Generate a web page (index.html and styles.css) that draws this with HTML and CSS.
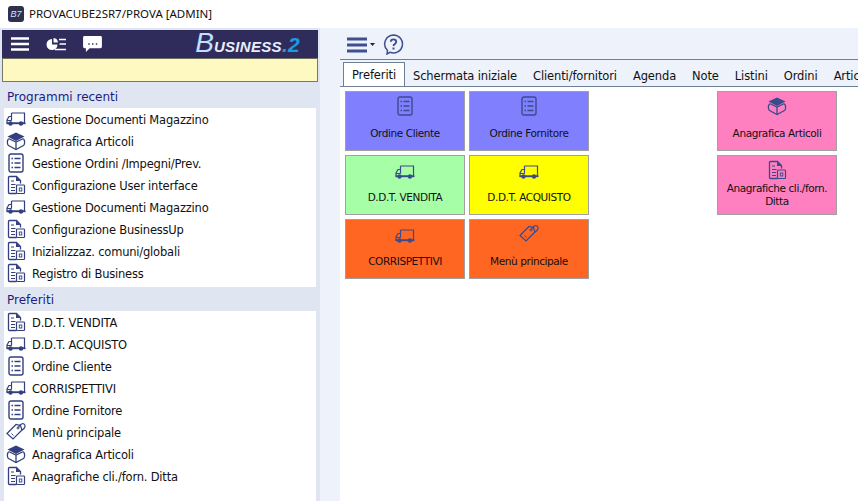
FILE: index.html
```html
<!DOCTYPE html>
<html lang="it">
<head>
<meta charset="utf-8">
<title>PROVACUBE2SR7/PROVA [ADMIN]</title>
<link rel="stylesheet" href="styles.css">
</head>
<body>
<svg class="defs" width="0" height="0" aria-hidden="true">
  <symbol id="truck" viewBox="0 0 20 14">
    <path d="M5.500 1H18.500V11H1V8L3 4.500H5.500M5.500 1V8.500M1 8.500H5.500" fill="none" stroke="currentColor" stroke-width="1.200"/>
    <path d="M0.500 10.500H19.500V12.200H0.500Z" fill="currentColor"/>
    <circle cx="4.500" cy="11.500" r="2.200" fill="currentColor"/>
    <circle cx="15" cy="11.500" r="2.200" fill="currentColor"/>
  </symbol>
  <symbol id="box" viewBox="0 0 20 20">
    <path d="M2.500 8C0.500 10 1.500 14 2.500 14.500L10 18.500L17.500 14.500C18.500 14 19.500 10 17.500 8" fill="none" stroke="currentColor" stroke-width="1.300"/>
    <path d="M10 11V18.500M2.500 7.500L10 11L17.500 7.500" fill="none" stroke="currentColor" stroke-width="1.300"/>
    <path d="M10 1.500L18.500 5.500L10 10L1.500 5.500Z" fill="currentColor"/>
  </symbol>
  <symbol id="list" viewBox="0 0 16 20">
    <rect x="1" y="1" width="14" height="18" rx="2" fill="none" stroke="currentColor" stroke-width="1.400"/>
    <path d="M3.500 5.500H5M3.500 10H5M3.500 14.500H5M6.500 5.500H12.500M6.500 10H12.500M6.500 14.500H12.500" stroke="currentColor" stroke-width="1.600"/>
  </symbol>
  <symbol id="doc" viewBox="0 0 18 20">
    <path d="M9.500 18.500H2.500A1 1 0 0 1 1.500 17.500V2.500A1 1 0 0 1 2.500 1.500H9.500L13.500 5.500V8.500" fill="none" stroke="currentColor" stroke-width="1.300"/>
    <path d="M9 1.500V6H13.500Z" fill="currentColor"/>
    <path d="M4 6H7M4 9.500H8.500M4 12.500H8M4 15.500H8" stroke="currentColor" stroke-width="1.200"/>
    <rect x="9.500" y="10" width="8" height="8.500" rx=".8" fill="none" stroke="currentColor" stroke-width="1.200"/>
    <rect x="12.300" y="13" width="2.500" height="3" fill="none" stroke="currentColor" stroke-width=".9"/>
  </symbol>
  <symbol id="tag" viewBox="0 0 20 20">
    <path d="M1 11.500L10 2.500L14.500 3.500L16 8L7 17Z" fill="none" stroke="currentColor" stroke-width="1.200"/>
    <circle cx="12" cy="6" r="1" fill="none" stroke="currentColor"/>
    <path d="M12.500 5.500C14 1 19 0.500 19 4C19 6 17 8 15 8" fill="none" stroke="currentColor" stroke-width="1.200"/>
    <path d="M5.500 11.500L7.500 13.500" stroke="currentColor"/>
  </symbol>
</svg>

<header class="titlebar">
  <span class="app-icon">B7</span>
  <span class="app-title">PROVACUBE2SR7/PROVA [ADMIN]</span>
</header>

<div class="workspace">
  <aside class="sidebar">
    <div class="brandbar">
      <svg class="b-icon" width="18" height="14" viewBox="0 0 18 14"><path d="M0 1.500H18M0 7H18M0 12.500H18" stroke="#fff" stroke-width="2.600"/></svg>
      <svg class="b-icon" width="20" height="14" viewBox="0 0 20 14"><path d="M6 2A5.500 5.500 0 1 0 11.500 7.500H6Z" fill="#fff"/><path d="M7.500 1A5 5 0 0 1 12 5.500H7.500Z" fill="#fff"/><path d="M13 2.500H20M13.500 7H20M9 12.500H20" stroke="#fff" stroke-width="1.700"/></svg>
      <svg class="b-icon" width="19" height="16" viewBox="0 0 20 17"><path d="M1.500 0H18.500A1.500 1.500 0 0 1 20 1.500V11.500A1.500 1.500 0 0 1 18.500 13H7L3 17V13H1.500A1.500 1.500 0 0 1 0 11.500V1.500A1.500 1.500 0 0 1 1.500 0Z" fill="#fff"/><path d="M5.500 8.500H7M9.500 8.500H11M13.500 8.500H15" stroke="#2f2c5c" stroke-width="1.800"/></svg>
      <div class="logo"><span class="logo-b">B</span>usiness<span class="logo-two">.2</span></div>
    </div>
    <div class="notice"></div>

    <h2 class="sec-title sec-first">Programmi recenti</h2>
    <ul class="menu">
      <li><svg class="mi mi-truck"><use href="#truck"/></svg>Gestione Documenti Magazzino</li>
      <li><svg class="mi"><use href="#box"/></svg>Anagrafica Articoli</li>
      <li><svg class="mi"><use href="#list"/></svg>Gestione Ordini /Impegni/Prev.</li>
      <li><svg class="mi"><use href="#doc"/></svg>Configurazione User interface</li>
      <li><svg class="mi mi-truck"><use href="#truck"/></svg>Gestione Documenti Magazzino</li>
      <li><svg class="mi"><use href="#doc"/></svg>Configurazione BusinessUp</li>
      <li><svg class="mi"><use href="#doc"/></svg>Inizializzaz. comuni/globali</li>
      <li><svg class="mi"><use href="#doc"/></svg>Registro di Business</li>
    </ul>

    <h2 class="sec-title">Preferiti</h2>
    <ul class="menu menu-fill">
      <li><svg class="mi"><use href="#doc"/></svg>D.D.T. VENDITA</li>
      <li><svg class="mi mi-truck"><use href="#truck"/></svg>D.D.T. ACQUISTO</li>
      <li><svg class="mi"><use href="#list"/></svg>Ordine Cliente</li>
      <li><svg class="mi mi-truck"><use href="#truck"/></svg>CORRISPETTIVI</li>
      <li><svg class="mi"><use href="#list"/></svg>Ordine Fornitore</li>
      <li><svg class="mi"><use href="#tag"/></svg>Menù principale</li>
      <li><svg class="mi"><use href="#box"/></svg>Anagrafica Articoli</li>
      <li><svg class="mi"><use href="#doc"/></svg>Anagrafiche cli./forn. Ditta</li>
    </ul>
  </aside>

  <div class="gutter"></div>

  <main class="main">
    <div class="toolbar">
      <svg width="20" height="16" viewBox="0 0 20 16"><path d="M0 2H20M0 8H20M0 14H20" stroke="#3f4f8f" stroke-width="3"/></svg>
      <svg class="caret" width="5" height="3" viewBox="0 0 5 3"><path d="M0 0H5L2.500 3Z" fill="#222"/></svg>
      <svg class="help" width="21" height="21" viewBox="0 0 21 21"><path d="M10.500 1A9 9 0 1 1 7 18.300L4 20L4.500 16.500A9 9 0 0 1 10.500 1Z" fill="none" stroke="#3f4f8f" stroke-width="1.500"/><path d="M7.800 7.800C7.800 4.500 13.200 4.500 13.200 7.800C13.200 10 10.500 9.800 10.500 12" fill="none" stroke="#3f4f8f" stroke-width="1.900"/><path d="M9.500 13.500H11.500V15.500H9.500Z" fill="#3f4f8f"/></svg>
    </div>
    <nav class="tabs">
      <span class="tab tab-on">Preferiti</span>
      <span class="tab">Schermata iniziale</span>
      <span class="tab">Clienti/fornitori</span>
      <span class="tab">Agenda</span>
      <span class="tab">Note</span>
      <span class="tab">Listini</span>
      <span class="tab">Ordini</span>
      <span class="tab">Articoli</span>
    </nav>
    <div class="tiles">
      <a class="tile violet"><svg class="ti"><use href="#list"/></svg><span class="tl">Ordine Cliente</span></a>
      <a class="tile violet"><svg class="ti"><use href="#list"/></svg><span class="tl">Ordine Fornitore</span></a>
      <span class="blank"></span>
      <a class="tile pink"><svg class="ti"><use href="#box"/></svg><span class="tl">Anagrafica Articoli</span></a>
      <a class="tile green"><svg class="ti ti-truck"><use href="#truck"/></svg><span class="tl">D.D.T. VENDITA</span></a>
      <a class="tile yellow"><svg class="ti ti-truck"><use href="#truck"/></svg><span class="tl">D.D.T. ACQUISTO</span></a>
      <span class="blank"></span>
      <a class="tile pink"><svg class="ti"><use href="#doc"/></svg><span class="tl tl-two">Anagrafiche cli./forn. Ditta</span></a>
      <a class="tile orange"><svg class="ti ti-truck"><use href="#truck"/></svg><span class="tl">CORRISPETTIVI</span></a>
      <a class="tile orange"><svg class="ti"><use href="#tag"/></svg><span class="tl">Menù principale</span></a>
    </div>
  </main>
</div>
</body>
</html>
```
FILE: styles.css
```css
* { box-sizing: border-box; }
html, body { height: 100%; }
body {
  margin: 0;
  overflow: hidden;
  background: #fff;
  color: #111;
  font: 11.500px/15px "DejaVu Sans", "Noto Sans", sans-serif;
  letter-spacing: -0.200px;
}
.defs { position: absolute; }

.titlebar {
  height: 28px;
  padding: 0 0 1px 8px;
  display: flex;
  align-items: center;
  gap: 5px;
  background: #fff;
}
.app-title { font: 11.500px/15px "Noto Sans", sans-serif; letter-spacing: 0; }
.app-icon {
  width: 16px;
  height: 16px;
  border-radius: 3px;
  background: #2f3050;
  color: #cfe0ff;
  font: italic 9px/16px "Liberation Sans", sans-serif;
  letter-spacing: 0;
  text-align: center;
}

.workspace { display: flex; height: 473px; }

.sidebar {
  width: 320px;
  flex: none;
  display: flex;
  flex-direction: column;
  padding: 2px 2px 0;
  background: #dfe6f2;
}
.brandbar {
  height: 28px;
  flex: none;
  display: flex;
  align-items: center;
  padding: 0 0 0 9px;
  gap: 17px;
  background: #2f2c5c;
}
.logo {
  margin: 0 18px 0 auto;
  color: #e8eefc;
  font: italic bold 21px/24px "Liberation Sans", sans-serif;
  font-variant: small-caps;
  letter-spacing: 0.300px;
}
.logo-b { color: #bfe0ff; font-weight: normal; font-size: 28px; letter-spacing: 0; }
.logo-two { color: #1d9be0; }
.notice {
  height: 24px;
  flex: none;
  background: #fdf9c0;
  border: 1px solid #77776a;
  border-top-color: #6e6e60;
}
.sec-title {
  margin: 0;
  height: 24px;
  flex: none;
  padding: 2px 0 0 5px;
  color: #1c1c80;
  font-size: 12px;
  font-weight: 400;
  letter-spacing: 0;
  line-height: 22px;
}
.sec-first { height: 26px; padding-top: 4px; }
.menu {
  list-style: none;
  margin: 0 2px;
  padding: 0 0 3px;
  background: #fff;
}
.menu-fill { flex: 1; }
.menu li {
  height: 22px;
  padding-top: 2px;
  display: flex;
  align-items: center;
  white-space: nowrap;
  color: #111;
}
.mi {
  width: 20px;
  height: 20px;
  flex: none;
  margin: -2px 6px 0 2px;
  color: #33407f;
}
.mi-truck { height: 14px; width: 20px; }

.gutter { width: 20px; flex: none; background: #eef2fa; }

.main { flex: 1; min-width: 0; display: flex; flex-direction: column; }
.toolbar {
  height: 32px;
  flex: none;
  display: flex;
  align-items: center;
  padding: 2px 0 0 7px;
  background: #eef2fa;
  border-bottom: 1px solid #6f7f94;
}
.caret { margin-left: 3px; }
.help { margin-left: 8px; }

.tabs {
  height: 27px;
  flex: none;
  display: flex;
  align-items: flex-end;
  padding-left: 3px;
  overflow: hidden;
  background: #eef2fa;
  border-bottom: 1px solid #6f7f94;
  white-space: nowrap;
  letter-spacing: -0.120px;
}
.tab { flex: none; height: 24px; padding: 7px 8px 0; }
.tab-on {
  height: 25px;
  margin-bottom: -1px;
  padding: 5px 8px 0;
  background: #fff;
  border: 1px solid #6f7f94;
  border-bottom: 0;
}

.tiles {
  display: grid;
  grid-template-columns: repeat(4, 120px);
  grid-auto-rows: 60px;
  gap: 4px;
  padding: 4px 0 0 5px;
}
.tile {
  display: flex;
  flex-direction: column;
  align-items: center;
  border: 1px solid #a0a0a0;
  color: #111;
  text-align: center;
  font-size: 10.500px;
  letter-spacing: -0.400px;
  line-height: 13px;
}
.ti { width: 20px; height: 20px; margin-top: 4px; color: #3a4a8c; flex: none; }
.ti-truck { height: 14px; margin-top: 9px; }
.tl { margin-top: 11px; padding: 0 6px; }
.ti-truck + .tl { margin-top: 12px; }
.tl-two { margin-top: 2px; padding: 0 4px; }
.violet { background: #8080ff; }
.pink { background: #ff80c0; }
.green { background: #a6ffa6; }
.yellow { background: #ffff00; }
.orange { background: #ff6622; }
```
